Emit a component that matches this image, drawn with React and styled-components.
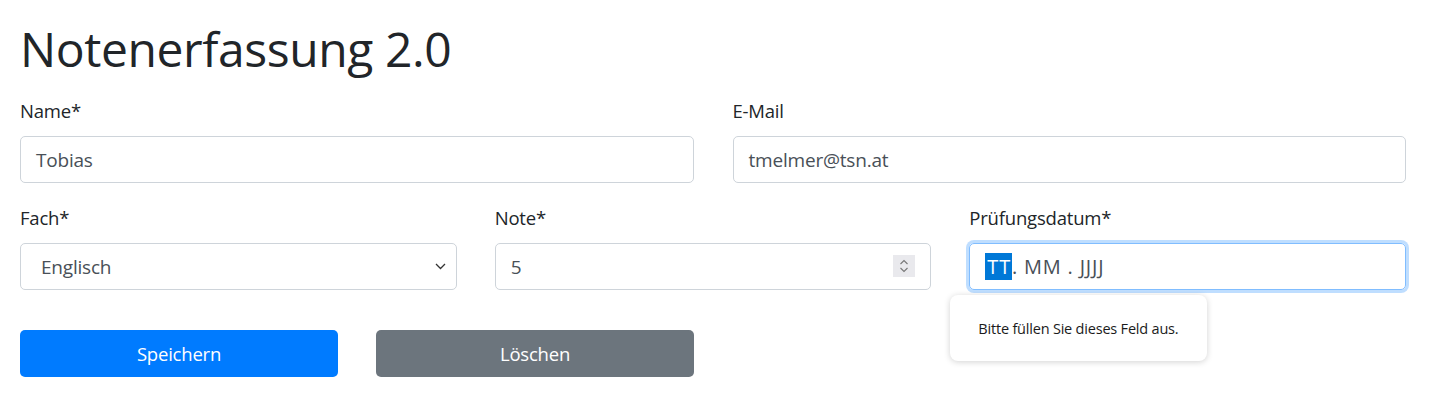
import React from 'react';
import styled, { createGlobalStyle } from 'styled-components';

const GlobalStyle = createGlobalStyle`
  body {
    margin: 0;
    background: #fff;
    color: #212529;
    font-family: 'Open Sans', 'Noto Sans', sans-serif;
  }
`;

const Page = styled.div`
  width: 1386px;
  padding: 19px 0 0 20px;
`;

const Title = styled.h1`
  margin: 0 0 17px;
  font-size: 48px;
  font-weight: 400;
  line-height: 60px;
  letter-spacing: -0.4px;
`;

const Row = styled.div`
  display: grid;
  grid-template-columns: repeat(${(p) => p.cols}, 1fr);
  column-gap: ${(p) => (p.cols === 3 ? 38 : 39)}px;
`;

const FormGroup = styled.div`
  position: relative;
  margin-bottom: 20px;
`;

const Label = styled.label`
  display: block;
  margin-bottom: 10px;
  font-size: 18.5px;
  line-height: 30px;
  letter-spacing: -0.2px;
`;

const Control = styled.div`
  position: relative;
  box-sizing: border-box;
  height: 47px;
  display: flex;
  align-items: center;
  padding: 0 ${(p) => (p.$select ? 20 : 15)}px;
  border: 1px solid ${(p) => (p.$focus ? '#80bdff' : '#ced4da')};
  border-radius: 5px;
  box-shadow: ${(p) => (p.$focus ? '0 0 0 3px rgba(0, 123, 255, 0.25)' : 'none')};
  color: #495057;
  font-size: ${(p) => (p.$focus ? 20 : 19)}px;
  letter-spacing: ${(p) => (p.$focus ? 0.8 : -0.2)}px;
  white-space: pre;
`;

const Selected = styled.span`
  display: inline-block;
  height: 27px;
  line-height: 27px;
  background: #0078d7;
  color: #fff;
  padding: 0 1px 0 2px;
`;

const Spinner = styled.div`
  position: absolute;
  right: 15px;
  top: 11px;
  width: 22px;
  height: 22px;
  background: #e9e9ed;
  display: flex;
  align-items: center;
  justify-content: center;
`;

const Chevron = styled.svg`
  position: absolute;
  right: 10px;
  top: 19px;
`;

const Bubble = styled.div`
  position: absolute;
  left: -19px;
  top: 92px;
  width: 257px;
  height: 66px;
  box-sizing: border-box;
  padding-left: 28px;
  display: flex;
  align-items: center;
  background: #fff;
  border-radius: 8px;
  box-shadow: 0 1px 6px rgba(0, 0, 0, 0.18);
  font-size: 14.5px;
  color: #1b1b1b;
  letter-spacing: -0.2px;
  z-index: 2;
`;

const ButtonRow = styled.div`
  width: 674px;
  display: grid;
  grid-template-columns: 1fr 1fr;
  column-gap: 38px;
  margin-top: 20px;
`;

const Button = styled.button`
  height: 47px;
  border: none;
  border-radius: 5px;
  background: ${(p) => (p.$variant === 'primary' ? '#007bff' : '#6c757d')};
  color: #fff;
  font-family: inherit;
  font-size: 18.5px;
  letter-spacing: -0.2px;
`;

const App = () => (
  <>
    <GlobalStyle />
    <Page>
      <Title>Notenerfassung 2.0</Title>
      <Row cols={2}>
        <FormGroup>
          <Label>Name*</Label>
          <Control>Tobias</Control>
        </FormGroup>
        <FormGroup>
          <Label>E-Mail</Label>
          <Control>tmelmer@tsn.at</Control>
        </FormGroup>
      </Row>
      <Row cols={3}>
        <FormGroup>
          <Label>Fach*</Label>
          <Control $select>
            Englisch
            <Chevron width="11" height="7" viewBox="0 0 11 7">
              <path d="M1 1l4.5 4.5L10 1" fill="none" stroke="#333" strokeWidth="1.3" />
            </Chevron>
          </Control>
        </FormGroup>
        <FormGroup>
          <Label>Note*</Label>
          <Control>
            5
            <Spinner>
              <svg width="12" height="18" viewBox="0 0 12 18">
                <path d="M2.5 7l3.5-3.5 3.5 3.5M2.5 11l3.5 3.5 3.5-3.5" fill="none" stroke="#777" strokeWidth="1.1" />
              </svg>
            </Spinner>
          </Control>
        </FormGroup>
        <FormGroup>
          <Label>Prüfungsdatum*</Label>
          <Control $focus>
            <Selected>TT</Selected>. MM . JJJJ
          </Control>
          <Bubble>Bitte füllen Sie dieses Feld aus.</Bubble>
        </FormGroup>
      </Row>
      <ButtonRow>
        <Button $variant="primary">Speichern</Button>
        <Button>Löschen</Button>
      </ButtonRow>
    </Page>
  </>
);

export default App;
